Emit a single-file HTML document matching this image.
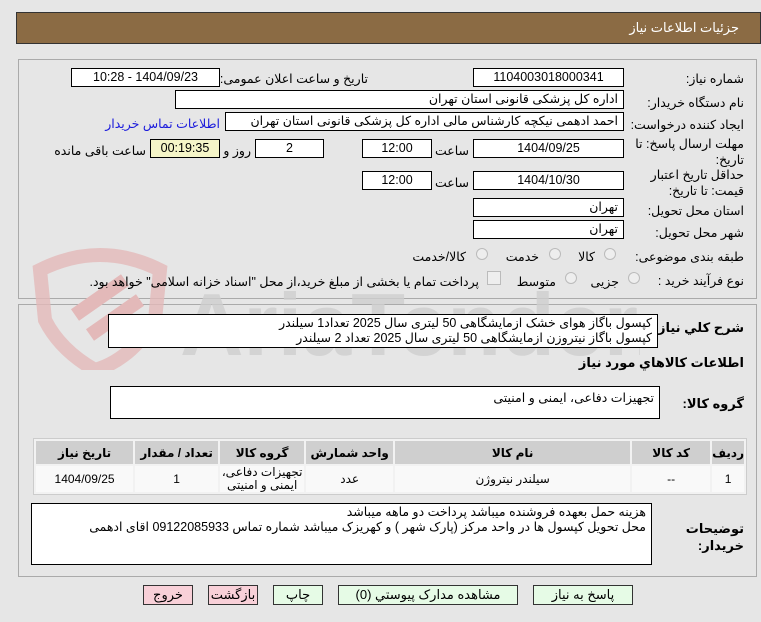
<!DOCTYPE html>
<html><head><meta charset="utf-8"><style>
body{margin:0;width:761px;height:622px;background:#e6e6e6;font-family:"Liberation Sans","DejaVu Sans",sans-serif;font-size:12.5px;color:#000;position:relative;overflow:hidden}
.a{position:absolute}
.box{position:absolute;background:#fff;border:1px solid #000;box-sizing:border-box;height:19px;line-height:17px;padding:0 5px;direction:rtl;white-space:nowrap;font-size:12.5px}
.c{text-align:center}
.l{position:absolute;direction:rtl;white-space:nowrap;text-align:right}
.w{white-space:normal}
.rad{position:absolute;width:12px;height:12px;border-radius:50%;border:1px solid #bbb;background:#eee;box-sizing:border-box}
.btn{position:absolute;top:585px;height:20px;border:1px solid #333;box-sizing:border-box;text-align:center;line-height:18px;font-size:13px;direction:rtl}
table{border-collapse:separate;border-spacing:2px;position:absolute;left:33px;top:438px;width:714px;background:#f2f2f2;border:1px solid #ccc}
th{background:#cfcfcf;height:23px;padding:0;font-weight:bold;font-size:12px}
td{background:#f9f9f9;height:25px;padding:0;text-align:center;font-size:12px;line-height:13px}
</style></head><body>
<div class="a" style="left:16px;top:12px;width:745px;height:32px;background:#8b6b44;border:1px solid #333;box-sizing:border-box"></div>
<div class="l" style="right:22px;top:20px;color:#fff;font-size:13px">جزئیات اطلاعات نیاز</div>
<div class="a" style="left:18px;top:59px;width:739px;height:240px;border:1px solid #aaa;box-sizing:border-box"></div>
<div class="a" style="left:18px;top:304px;width:739px;height:273px;border:1px solid #aaa;box-sizing:border-box"></div>
<svg class="a" style="left:20px;top:240px" width="620" height="130">
<path d="M20 30 Q80 0 140 30 L135 80 Q110 120 75 130 Q40 110 25 80 Z" fill="none" stroke="#e3b9b9" stroke-width="14" opacity="0.8"/>
<path d="M55 75 L105 40 M70 95 L120 60" stroke="#e3b9b9" stroke-width="14"/>
<text x="160" y="115" font-family="Liberation Sans" font-weight="bold" font-size="88" fill="#cfcfcf" opacity="0.8">AriaTender.net</text>
</svg>
<div class="l" style="right:17px;top:71px">شماره نیاز:</div>
<div class="box c" style="left:473px;top:68px;width:151px">1104003018000341</div>
<div class="l" style="right:393px;top:71px">تاریخ و ساعت اعلان عمومی:</div>
<div class="box c" style="left:71px;top:68px;width:149px">1404/09/23 - 10:28</div>
<div class="l" style="right:17px;top:95px">نام دستگاه خریدار:</div>
<div class="box" style="left:175px;top:90px;width:449px">اداره کل پزشکی قانونی استان تهران</div>
<div class="l" style="right:17px;top:117px">ایجاد کننده درخواست:</div>
<div class="box" style="left:225px;top:112px;width:399px">احمد ادهمی نیکچه کارشناس مالی اداره کل پزشکی قانونی استان تهران</div>
<div class="l" style="right:541px;top:116px;color:#1a1adc">اطلاعات تماس خریدار</div>
<div class="l w" style="right:17px;top:136px;line-height:16px;width:115px">مهلت ارسال پاسخ: تا تاریخ:</div>
<div class="box c" style="left:473px;top:139px;width:151px">1404/09/25</div>
<div class="l" style="right:292px;top:143px">ساعت</div>
<div class="box c" style="left:362px;top:139px;width:70px">12:00</div>
<div class="box c" style="left:255px;top:139px;width:69px">2</div>
<div class="l" style="right:510px;top:143px">روز و</div>
<div class="box c" style="left:150px;top:139px;width:70px;background:#f5f5c8">00:19:35</div>
<div class="l" style="right:615px;top:143px">ساعت باقی مانده</div>
<div class="l w" style="right:17px;top:167px;line-height:16px;width:105px">حداقل تاریخ اعتبار قیمت: تا تاریخ:</div>
<div class="box c" style="left:473px;top:171px;width:151px">1404/10/30</div>
<div class="l" style="right:292px;top:175px">ساعت</div>
<div class="box c" style="left:362px;top:171px;width:70px">12:00</div>
<div class="l" style="right:17px;top:203px">استان محل تحویل:</div>
<div class="box" style="left:473px;top:198px;width:151px">تهران</div>
<div class="l" style="right:17px;top:225px">شهر محل تحویل:</div>
<div class="box" style="left:473px;top:220px;width:151px">تهران</div>
<div class="l" style="right:17px;top:249px">طبقه بندی موضوعی:</div>
<div class="rad" style="left:604px;top:248px"></div><div class="l" style="right:166px;top:249px">کالا</div>
<div class="rad" style="left:549px;top:248px"></div><div class="l" style="right:222px;top:249px">خدمت</div>
<div class="rad" style="left:476px;top:248px"></div><div class="l" style="right:295px;top:249px">کالا/خدمت</div>
<div class="l" style="right:17px;top:273px">نوع فرآیند خرید :</div>
<div class="rad" style="left:628px;top:272px"></div><div class="l" style="right:142px;top:274px">جزیی</div>
<div class="rad" style="left:565px;top:272px"></div><div class="l" style="right:205px;top:274px">متوسط</div>
<div class="a" style="left:487px;top:271px;width:12px;height:12px;border:1px solid #bbb;background:#eee"></div>
<div class="l" style="right:282px;top:274px">پرداخت تمام یا بخشی از مبلغ خرید،از محل "اسناد خزانه اسلامی" خواهد بود.</div>
<div class="l" style="right:17px;top:320px;font-weight:bold;font-size:13px">شرح کلي نياز:</div>
<div class="box" style="left:108px;top:314px;width:550px;height:34px;line-height:15px;padding-top:1px;font-size:12.5px">کپسول باگاز هوای خشک ازمایشگاهی 50 لیتری سال 2025 تعداد1 سیلندر<br>کپسول باگاز نیتروزن ازمایشگاهی 50 لیتری سال 2025 تعداد 2 سیلندر</div>
<div class="l" style="right:17px;top:355px;font-weight:bold;font-size:13px">اطلاعات کالاهاي مورد نياز</div>
<div class="l" style="right:17px;top:396px;font-weight:bold;font-size:13px">گروه کالا:</div>
<div class="box" style="left:110px;top:386px;width:550px;height:33px;padding-top:3px">تجهیزات دفاعی، ایمنی و امنیتی</div>
<table dir="rtl">
<tr><th style="width:26px">ردیف</th><th style="width:78px">کد کالا</th><th style="width:235px">نام کالا</th><th style="width:87px">واحد شمارش</th><th style="width:84px">گروه کالا</th><th style="width:83px">تعداد / مقدار</th><th>تاریخ نیاز</th></tr>
<tr><td>1</td><td>--</td><td>سیلندر نیتروژن</td><td>عدد</td><td>تجهیزات دفاعی، ایمنی و امنیتی</td><td>1</td><td>1404/09/25</td></tr>
</table>
<div class="l w" style="right:17px;top:520px;font-weight:bold;font-size:13px;line-height:17px;width:60px">توضیحات خریدار:</div>
<div class="box" style="left:31px;top:503px;width:621px;height:62px;line-height:15px;padding-top:1px;font-size:12.5px">هزینه حمل بعهده فروشنده میباشد پرداخت دو ماهه میباشد<br>محل تحویل کپسول ها در واحد مرکز (پارک شهر ) و کهریزک میباشد شماره تماس 09122085933 اقای ادهمی</div>
<div class="btn" style="left:533px;width:100px;background:#e6fbe6">پاسخ به نیاز</div>
<div class="btn" style="left:338px;width:180px;background:#e6fbe6">مشاهده مدارک پیوستي (0)</div>
<div class="btn" style="left:273px;width:50px;background:#e6fbe6">چاپ</div>
<div class="btn" style="left:208px;width:50px;background:#f8d0d8">بازگشت</div>
<div class="btn" style="left:143px;width:50px;background:#f8d0d8">خروج</div>
</body></html>
